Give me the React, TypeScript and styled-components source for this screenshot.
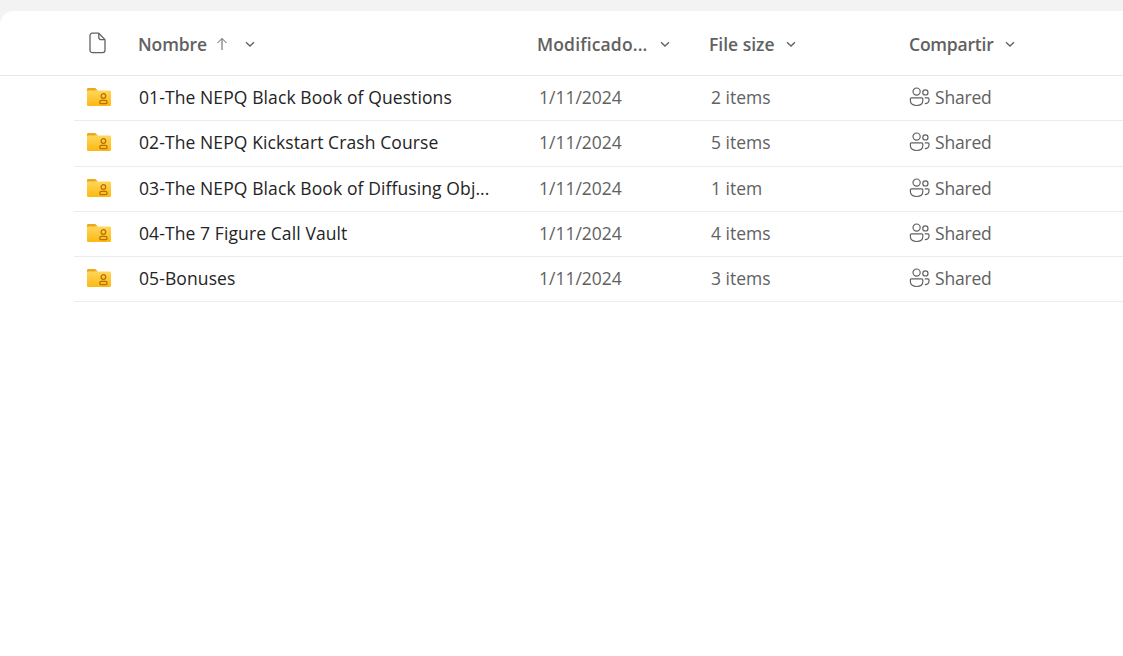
import styled, { createGlobalStyle } from 'styled-components';

const GlobalStyle = createGlobalStyle`
  html, body {
    margin: 0;
    padding: 0;
    background: #f3f3f3;
    font-family: "Open Sans", "Noto Sans", "Liberation Sans", sans-serif;
  }
`;

const Page = styled.div`
  height: 656px;
  padding-top: 11px;
  box-sizing: border-box;
  overflow: hidden;
`;

const Card = styled.main`
  height: 645px;
  background: #fff;
  border-top-left-radius: 14px;
  overflow: hidden;
`;

const HeaderRow = styled.div`
  display: grid;
  grid-template-columns: 138px 399px 172px 200px 1fr;
  align-items: center;
  height: 65.2px;
  box-sizing: border-box;
  padding-top: 1px;
  border-bottom: 1px solid #e6e6e6;
  color: #616161;
  font-size: 17.5px;
  font-weight: 600;
`;

const HeaderCell = styled.div<{ $tracking?: number }>`
  display: flex;
  align-items: center;
  white-space: nowrap;
  letter-spacing: ${(p) => p.$tracking ?? 0}px;
`;

const FileHead = styled.div`
  padding-left: 89px;
  margin-top: -2px;
  display: flex;
  align-items: center;
  height: 22px;
`;

const Sort = styled.svg`
  margin-left: 8px;
  width: 14px;
  height: 14px;
  fill: none;
  stroke: #616161;
  stroke-width: 1;
`;

const Caret = styled.svg<{ $gap: number }>`
  margin-left: ${(p) => p.$gap}px;
  width: 10px;
  height: 10px;
  fill: none;
  stroke: #616161;
  stroke-width: 1.3;
`;

const Row = styled.div`
  display: grid;
  grid-template-columns: 65px 400px 172px 198px 1fr;
  align-items: center;
  height: 45.2px;
  margin-left: 74px;
  padding-bottom: 2px;
  box-sizing: border-box;
  border-bottom: 1px solid #ececec;
  font-size: 17.5px;
  white-space: nowrap;
`;

const IconCell = styled.div`
  padding-left: 13px;
  display: flex;
  align-items: center;
`;

const NameCell = styled.div`
  color: #242424;
  letter-spacing: 0.1px;
`;

const MetaCell = styled.div`
  color: #616161;
`;

const SharedCell = styled.div`
  display: flex;
  align-items: center;
  gap: 5px;
  color: #616161;
  letter-spacing: -0.2px;
`;

const FileIcon = () => (
  <svg width="18" height="22" viewBox="0 0 18 22" fill="none" stroke="#616161" strokeWidth="1.3">
    <path d="M3.2 1.2h6.6l6.2 6.4v10.6a2.4 2.4 0 0 1-2.4 2.4H3.4A2.4 2.4 0 0 1 1 18.2V3.4a2.2 2.2 0 0 1 2.2-2.2z" strokeLinejoin="round" />
    <path d="M9.8 1.4v4a2.2 2.2 0 0 0 2.2 2.2h3.8" />
  </svg>
);

const FolderIcon = () => (
  <svg width="24" height="18" viewBox="0 0 24 18">
    <defs>
      <linearGradient id="folderFill" x1="0" y1="0" x2="0" y2="1">
        <stop offset="0" stopColor="#ffd75a" />
        <stop offset="1" stopColor="#fdb813" />
      </linearGradient>
    </defs>
    <path d="M0 1.2A1.2 1.2 0 0 1 1.2 0h7l2.8 2.5-11 1.5z" fill="#eca81b" />
    <rect x="0" y="2.4" width="24" height="15.6" rx="1.2" fill="url(#folderFill)" />
    <circle cx="16.4" cy="8" r="2.3" fill="none" stroke="#b87000" strokeWidth="1.3" />
    <path d="M12.8 14.4v-.4a1.6 1.6 0 0 1 1.6-1.6h4a1.6 1.6 0 0 1 1.6 1.6v.4a1.3 1.3 0 0 1-1.3 1.3h-4.6a1.3 1.3 0 0 1-1.3-1.3z" fill="none" stroke="#b87000" strokeWidth="1.3" />
  </svg>
);

const SharedIcon = () => (
  <svg width="21" height="20" viewBox="0 0 21 20" fill="none" stroke="#616161" strokeWidth="1.2">
    <circle cx="7.6" cy="4.6" r="3.6" />
    <circle cx="16.4" cy="5.4" r="2.6" />
    <path d="M2.4 10.8h10.4a1 1 0 0 1 1 1v2c0 2.9-2.6 4.7-6.2 4.7s-6.2-1.8-6.2-4.7v-2a1 1 0 0 1 1-1z" />
    <path d="M15.8 10.8h3.2a1 1 0 0 1 1 1v1c0 2.2-1.8 3.8-4.2 3.8" />
  </svg>
);

const ChevronDown = ({ gap }: { gap: number }) => (
  <Caret $gap={gap} viewBox="0 0 10 10">
    <path d="M1 3.2 5 7l4-3.8" />
  </Caret>
);

const rows = [
  { name: '01-The NEPQ Black Book of Questions', size: '2 items' },
  { name: '02-The NEPQ Kickstart Crash Course', size: '5 items' },
  { name: '03-The NEPQ Black Book of Diffusing Obj...', size: '1 item' },
  { name: '04-The 7 Figure Call Vault', size: '4 items' },
  { name: '05-Bonuses', size: '3 items' },
];

export default function App() {
  return (
    <>
      <GlobalStyle />
      <Page>
        <Card>
          <HeaderRow>
            <FileHead>
              <FileIcon />
            </FileHead>
            <HeaderCell $tracking={-0.1}>
              Nombre
              <Sort viewBox="0 0 14 14">
                <path d="M7 13V1.5M2.5 6 7 1.5 11.5 6" />
              </Sort>
              <ChevronDown gap={16} />
            </HeaderCell>
            <HeaderCell $tracking={0.15}>
              Modificado...
              <ChevronDown gap={12} />
            </HeaderCell>
            <HeaderCell>
              File size
              <ChevronDown gap={11} />
            </HeaderCell>
            <HeaderCell $tracking={-0.2}>
              Compartir
              <ChevronDown gap={11} />
            </HeaderCell>
          </HeaderRow>
          {rows.map((row) => (
            <Row key={row.name}>
              <IconCell>
                <FolderIcon />
              </IconCell>
              <NameCell>{row.name}</NameCell>
              <MetaCell>1/11/2024</MetaCell>
              <MetaCell>{row.size}</MetaCell>
              <SharedCell>
                <SharedIcon />
                Shared
              </SharedCell>
            </Row>
          ))}
        </Card>
      </Page>
    </>
  );
}
